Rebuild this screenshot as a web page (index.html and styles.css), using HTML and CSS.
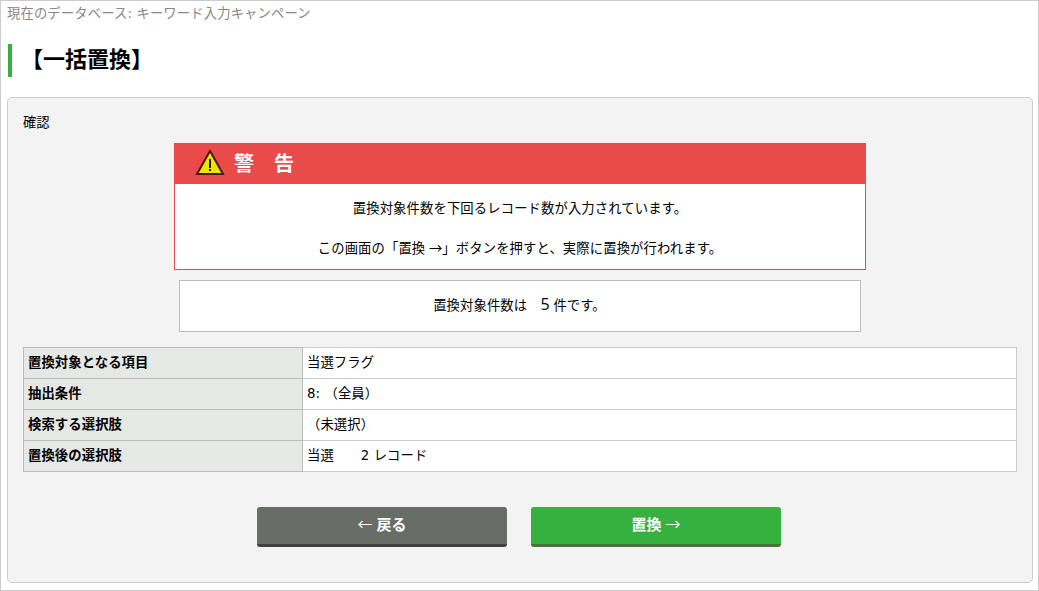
FILE: index.html
```html
<!DOCTYPE html>
<html lang="ja">
<head>
    <meta charset="UTF-8">
    <meta name="viewport" content="width=device-width, initial-scale=1.0">
    <title>一括置換</title>
    <link rel="stylesheet" href="styles.css">
</head>
<body>
    <div class="page">
        <p class="database">現在のデータベース: キーワード入力キャンペーン</p>
        <h1>【一括置換】</h1>
        <div class="panel">
            <p class="confirm">確認</p>
            <div class="warning">
                <div class="warning-header">
                    <svg class="warning-icon" width="30" height="27" viewBox="0 0 30 27">
                        <path d="M15 2 L28 25 H2 Z" fill="#e6e600" stroke="#4d1717" stroke-width="2"/>
                        <path d="M14 10 h2 v9 h-2 z M14 20 h2 v2 h-2 z" fill="#301010"/>
                    </svg>
                    <h2>警　告</h2>
                </div>
                <div class="warning-body">
                    <p>置換対象件数を下回るレコード数が入力されています。</p>
                    <p>この画面の「置換 <span class="arrow">→</span>」ボタンを押すと、実際に置換が行われます。</p>
                </div>
            </div>
            <div class="count">置換対象件数は　<span class="number">5</span> 件です。</div>
            <table>
                <tr>
                    <th>置換対象となる項目</th>
                    <td>当選フラグ</td>
                </tr>
                <tr>
                    <th>抽出条件</th>
                    <td>8: （全員）</td>
                </tr>
                <tr>
                    <th>検索する選択肢</th>
                    <td>（未選択）</td>
                </tr>
                <tr>
                    <th>置換後の選択肢</th>
                    <td>当選　　2 レコード</td>
                </tr>
            </table>
            <div class="buttons">
                <button class="back"><span class="arrow">←</span> 戻る</button>
                <button class="replace">置換 <span class="arrow">→</span></button>
            </div>
        </div>
    </div>
</body>
</html>
```
FILE: styles.css
```css
*{
    box-sizing: border-box;
}
body{
    margin: 0;
    background-color: #fff;
    color: #000;
    font-family: "Open Sans", "Noto Sans CJK JP", sans-serif;
    font-size: 13.33px;
    line-height: 20px;
}
p, h1, h2{
    margin: 0;
}
.page{
    height: 591px;
    border: 1px solid #ccc;
    padding: 3px 5px 0 6px;
}
.database{
    height: 20px;
    color: #888;
    font-family: "DejaVu Sans", "Noto Sans CJK JP", sans-serif;
    letter-spacing: 0.13px;
}
h1{
    height: 33px;
    margin: 20px 0 20px 1px;
    padding-left: 9px;
    border-left: 4px solid #36b03f;
    font-size: 22px;
    line-height: 28px;
}
.panel{
    height: 486px;
    padding: 14px 15px;
    border: 1px solid #ccc;
    border-radius: 5px;
    background-color: #f3f3f3;
}
.confirm{
    height: 31px;
}
.warning{
    width: 692px;
    height: 127px;
    margin-left: 151px;
    border: 1px solid #e94a4a;
    background-color: #fff;
}
.warning-header{
    display: flex;
    align-items: center;
    height: 40px;
    padding: 0 20px 4px;
    gap: 9px;
    background-color: #e94a4a;
    color: #fff;
}
h2{
    padding-top: 4px;
    font-size: 20px;
}
.warning-body{
    display: flex;
    flex-direction: column;
    gap: 20px;
    padding-top: 14px;
    letter-spacing: 0.12px;
    text-align: center;
}
.count{
    width: 682px;
    height: 52px;
    margin: 10px 0 15px 156px;
    padding: 13px 1px 0 0;
    border: 1px solid #bbb;
    background-color: #fff;
    letter-spacing: 0.1px;
    text-align: center;
}
.number{
    font-size: 16px;
}
table{
    width: 994px;
    border-collapse: collapse;
}
th, td{
    height: 31px;
    padding: 0 4px 2px;
    border: 1px solid #ccc;
    background-color: #fff;
    text-align: left;
}
th{
    width: 279px;
    border-color: #bbb;
    background-color: #e5e8e5;
    letter-spacing: 0.1px;
}
td{
    padding-bottom: 0;
    font-family: "DejaVu Sans", "Noto Sans CJK JP", sans-serif;
    letter-spacing: 0.1px;
}
.buttons{
    display: flex;
    justify-content: center;
    gap: 24px;
    margin-top: 35px;
    padding-right: 2px;
}
button{
    width: 250px;
    height: 40px;
    padding: 0 0 4px;
    border: none;
    border-bottom: 3px solid #404040;
    border-radius: 3px;
    background-color: #686d67;
    color: #fff;
    font-family: inherit;
    font-size: 15px;
    font-weight: bold;
    cursor: pointer;
}
.replace{
    border-bottom-color: #4f7040;
    background-color: #36b03f;
}
.arrow{
    font-family: "Noto Sans CJK JP", sans-serif;
    font-weight: normal;
}
```
